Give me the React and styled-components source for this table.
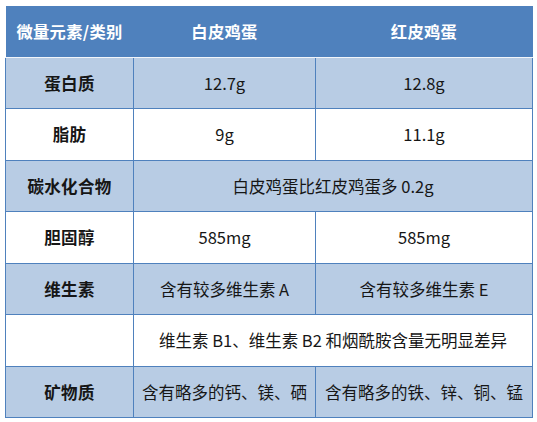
import React from "react";
import styled, { createGlobalStyle } from "styled-components";

const Global = createGlobalStyle`
  html, body { margin: 0; padding: 0; background: #ffffff; }
  body { font-family: "Noto Sans CJK SC", "Noto Sans", sans-serif; }
`;

const Page = styled.div`
  padding: 6px 0 0 5px;
`;

const Table = styled.table`
  border-collapse: collapse;
  width: 527px;
  table-layout: fixed;
  font-family: "Noto Sans CJK SC", "Noto Sans", sans-serif;
  font-size: 16.5px;
  color: #161616;
`;

const HeadRow = styled.tr`
  height: 51px;
  background: #4f81bd;
`;

const Th = styled.th`
  color: #ffffff;
  font-weight: 700;
  font-size: 16.3px;
  padding: 0;
  text-align: center;
  border-bottom: 1px solid #f2f5fa;
  letter-spacing: 0.3px;
`;

const Row = styled.tr`
  height: 51.5px;
  background: ${(p) => (p.$shaded ? "#b8cce4" : "#ffffff")};
`;

const Label = styled.td`
  font-weight: 700;
  font-size: 16.5px;
  text-align: center;
  padding: 0;
  border: 1px solid #4f81bd;
  letter-spacing: 0.3px;
`;

const Cell = styled.td`
  text-align: center;
  padding: 0;
  border: 1px solid #4f81bd;
  white-space: nowrap;
`;

const rows = [
  { label: "蛋白质", a: "12.7g", b: "12.8g", shaded: true },
  { label: "脂肪", a: "9g", b: "11.1g", shaded: false },
  { label: "碳水化合物", merged: "白皮鸡蛋比红皮鸡蛋多 0.2g", shaded: true },
  { label: "胆固醇", a: "585mg", b: "585mg", shaded: false },
  { label: "维生素", a: "含有较多维生素 A", b: "含有较多维生素 E", shaded: true },
  { label: "", merged: "维生素 B1、维生素 B2 和烟酰胺含量无明显差异", shaded: false },
  { label: "矿物质", a: "含有略多的钙、镁、硒", b: "含有略多的铁、锌、铜、锰", shaded: true },
];

export default function App() {
  return (
    <>
      <Global />
      <Page>
        <Table>
          <colgroup>
            <col style={{ width: 128 }} />
            <col style={{ width: 182 }} />
            <col style={{ width: 217 }} />
          </colgroup>
          <thead>
            <HeadRow>
              <Th>微量元素/类别</Th>
              <Th>白皮鸡蛋</Th>
              <Th>红皮鸡蛋</Th>
            </HeadRow>
          </thead>
          <tbody>
            {rows.map((r, i) => (
              <Row key={i} $shaded={r.shaded}>
                <Label>{r.label}</Label>
                {r.merged ? (
                  <Cell colSpan={2}>{r.merged}</Cell>
                ) : (
                  <>
                    <Cell>{r.a}</Cell>
                    <Cell>{r.b}</Cell>
                  </>
                )}
              </Row>
            ))}
          </tbody>
        </Table>
      </Page>
    </>
  );
}
